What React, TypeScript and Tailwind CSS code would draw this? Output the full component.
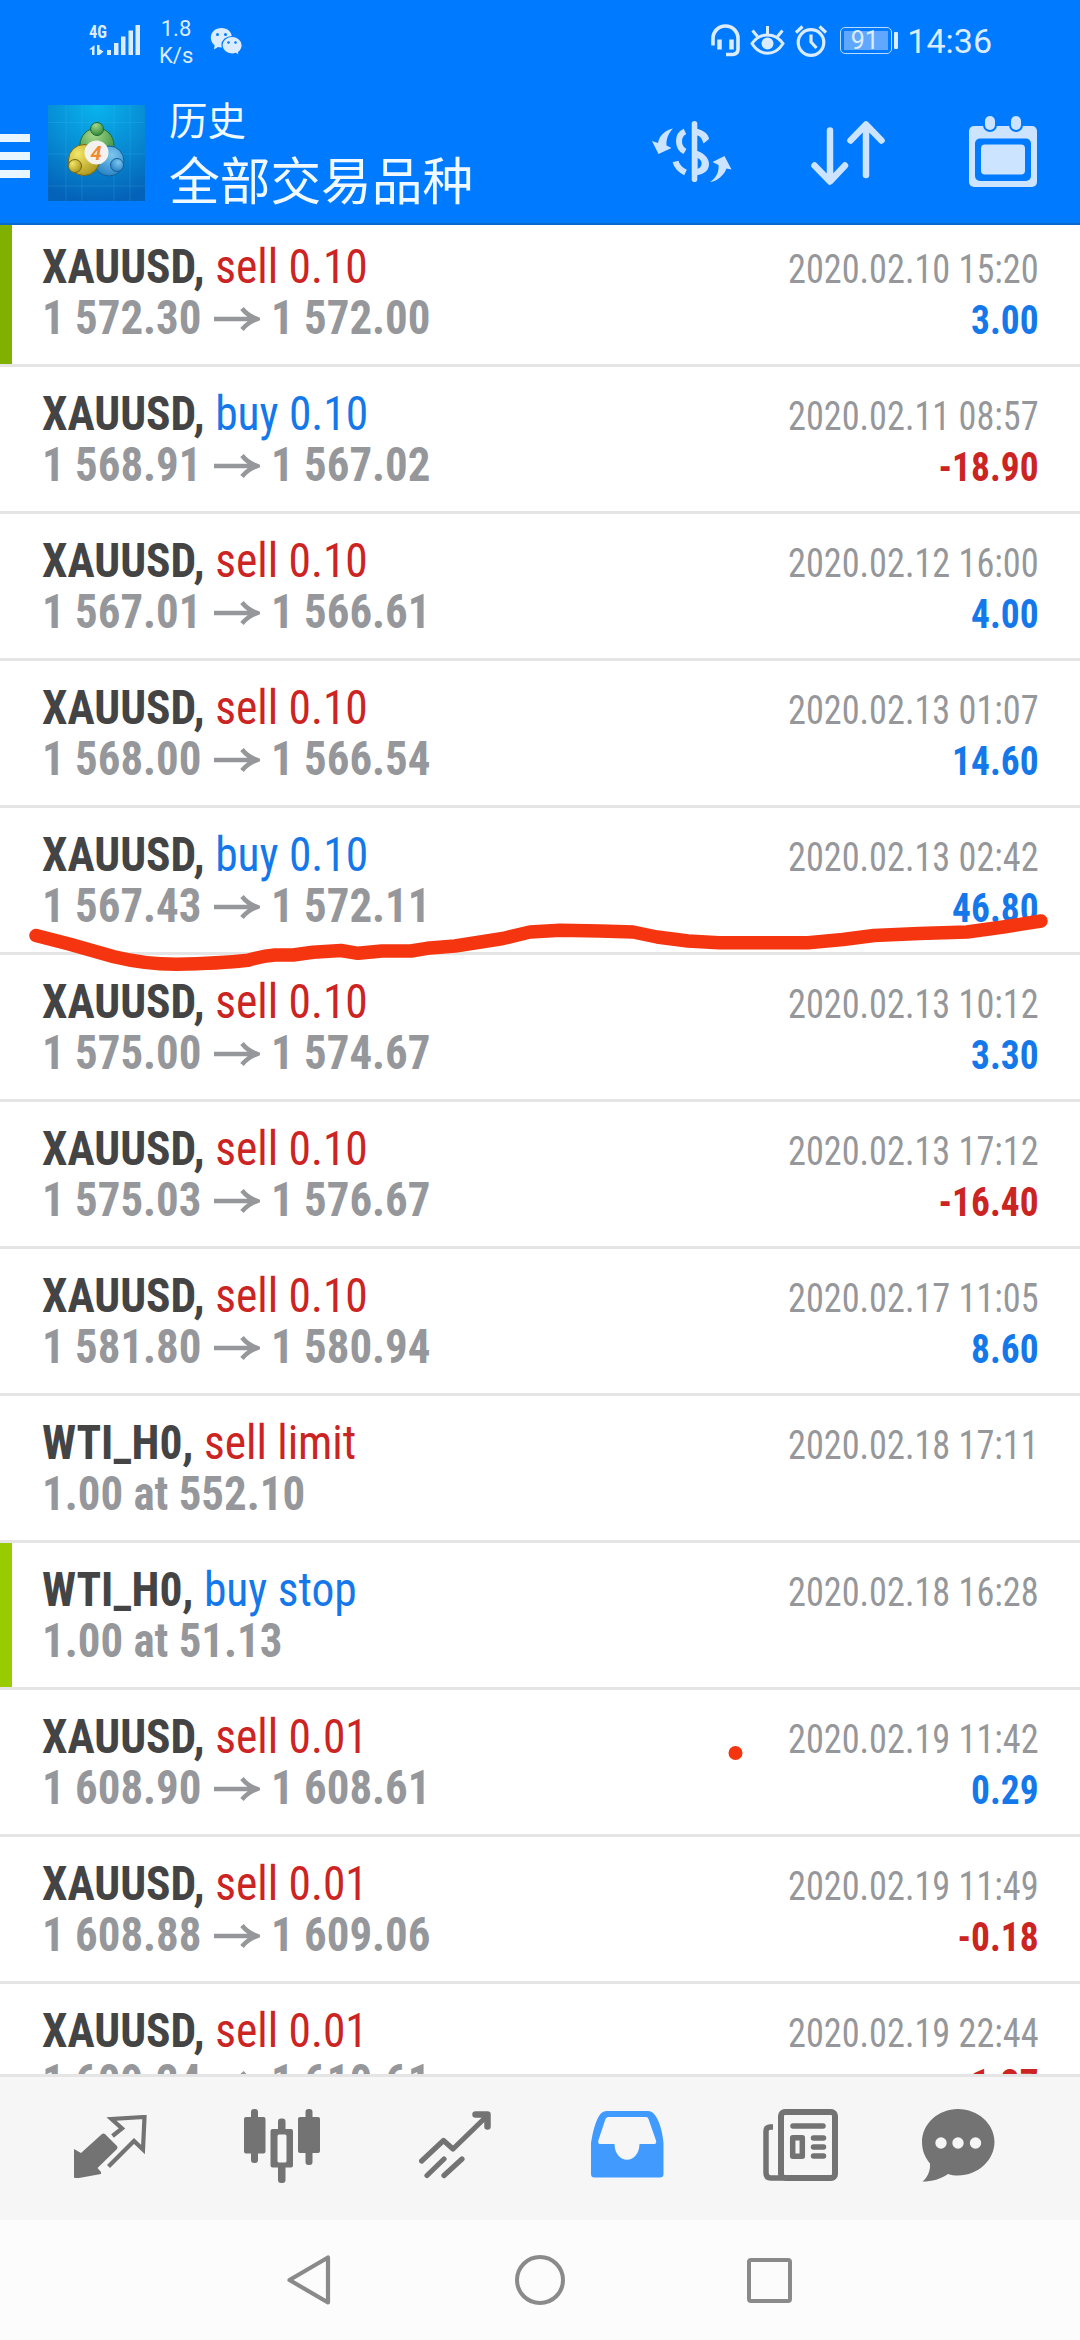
interface Deal {
  symbol: string;
  side: "buy" | "sell";
  volume: string;
  open?: string;
  close?: string;
  note?: string;
  time: string;
  profit?: string;
  mark?: "dark" | "light";
}

const deals: Deal[] = [
  { symbol: "XAUUSD", side: "sell", volume: "0.10", open: "1 572.30", close: "1 572.00", time: "2020.02.10 15:20", profit: "3.00", mark: "dark" },
  { symbol: "XAUUSD", side: "buy", volume: "0.10", open: "1 568.91", close: "1 567.02", time: "2020.02.11 08:57", profit: "-18.90" },
  { symbol: "XAUUSD", side: "sell", volume: "0.10", open: "1 567.01", close: "1 566.61", time: "2020.02.12 16:00", profit: "4.00" },
  { symbol: "XAUUSD", side: "sell", volume: "0.10", open: "1 568.00", close: "1 566.54", time: "2020.02.13 01:07", profit: "14.60" },
  { symbol: "XAUUSD", side: "buy", volume: "0.10", open: "1 567.43", close: "1 572.11", time: "2020.02.13 02:42", profit: "46.80" },
  { symbol: "XAUUSD", side: "sell", volume: "0.10", open: "1 575.00", close: "1 574.67", time: "2020.02.13 10:12", profit: "3.30" },
  { symbol: "XAUUSD", side: "sell", volume: "0.10", open: "1 575.03", close: "1 576.67", time: "2020.02.13 17:12", profit: "-16.40" },
  { symbol: "XAUUSD", side: "sell", volume: "0.10", open: "1 581.80", close: "1 580.94", time: "2020.02.17 11:05", profit: "8.60" },
  { symbol: "WTI_H0", side: "sell", volume: "limit", note: "1.00 at 552.10", time: "2020.02.18 17:11" },
  { symbol: "WTI_H0", side: "buy", volume: "stop", note: "1.00 at 51.13", time: "2020.02.18 16:28", mark: "light" },
  { symbol: "XAUUSD", side: "sell", volume: "0.01", open: "1 608.90", close: "1 608.61", time: "2020.02.19 11:42", profit: "0.29" },
  { symbol: "XAUUSD", side: "sell", volume: "0.01", open: "1 608.88", close: "1 609.06", time: "2020.02.19 11:49", profit: "-0.18" },
  { symbol: "XAUUSD", side: "sell", volume: "0.01", open: "1 609.24", close: "1 610.61", time: "2020.02.19 22:44", profit: "-1.37" },
];

const StatusBar = () => (
  <div className="flex h-[80px] items-start justify-between pl-[89px] pr-[88px] pt-[18px] text-[#dcecff]">
    <div className="flex items-start">
      <svg width="52" height="40" viewBox="0 0 52 40" className="overflow-visible" fill="currentColor">
        <text x="0" y="20" textLength="18" lengthAdjust="spacingAndGlyphs" className="font-['Roboto_Condensed',sans-serif] text-[19px] font-bold">4G</text>
        <path d="M0 31.500L5.500 27V37H3V31.500H0zM8 27H10.500V31L14.500 33.500 10.500 37H8z" />
        <path d="M18 32h4v5h-4zM25 25h4.500v12H25zM32 18.500h4.500V37H32zM39.500 12.500H44V37h-4.500zM46.500 7H51v30h-4.500z" />
      </svg>
      <div className="-mt-[3px] ml-[18px] w-[34px] text-center font-['Roboto',sans-serif] text-[22px] leading-[27px]">
        <div>1.8</div>
        <div>K/s</div>
      </div>
      <svg width="33" height="30" viewBox="0 0 33 30" className="ml-[17px] mt-[9px]">
        <path d="M11.500 1C5.400 1 .8 5.200.8 10.600c0 3.300 1.500 5.900 3.800 7.700L4 22.500l4-2.400c5 1.500 14-.5 14-9.500C22 5.200 17.600 1 11.500 1z" fill="currentColor" />
        <path d="M22 9.500c-5.600 0-10 3.800-10 8.700s4.400 8.800 10 8.800c1.300 0 2.700-.2 3.800-.6l3.400 2-.6-3.200c2.200-1.700 3.600-4.200 3.600-7 0-4.900-4.600-8.700-10.200-8.700z" fill="currentColor" stroke="#007aff" strokeWidth="1.200" />
        <g fill="#007aff">
          <circle cx="7.500" cy="7.500" r="1.500" />
          <circle cx="15.500" cy="7.500" r="1.500" />
          <circle cx="18.500" cy="15.500" r="1.300" />
          <circle cx="25.500" cy="15.500" r="1.300" />
        </g>
      </svg>
    </div>

    <div className="flex items-start">
      <svg width="30" height="34" viewBox="0 0 30 34" className="mt-[6px]" fill="none" stroke="currentColor" strokeWidth="3.600">
        <path d="M2 21.500V14.500C2 7.500 7.500 2 14.500 2S27 7.500 27 14.500V25q0 5-5 5.500H15" />
        <path d="M8.500 15.500v10M20.500 15.500v10" strokeWidth="4.500" />
      </svg>
      <svg width="36" height="32" viewBox="0 0 36 32" className="ml-[9px] mt-[7px]" fill="none" stroke="currentColor" strokeWidth="3">
        <path d="M2 18.500C10 7 25 7 33 18.500 25 31.500 10 31.500 2 18.500z" />
        <path d="M17.500 1v8M2.500 5.500l5 6M32.500 5.500l-5 6" />
        <circle cx="17.500" cy="18.500" r="6" fill="currentColor" stroke="none" />
      </svg>
      <svg width="32" height="33" viewBox="0 0 32 33" className="ml-[9px] mt-[7px]" fill="none" stroke="currentColor" strokeWidth="3.200">
        <circle cx="16" cy="17.500" r="12.800" />
        <path d="M16 9.500v7.500l5.500 6M1 7.500l6.500-6M24.500 1.500l6.500 6" />
      </svg>
      <div className="ml-[13px] mt-[9px] flex items-center">
        <div className="flex h-[27px] w-[52px] rounded-[5px] border-[1.500px] border-[#b8dcff] p-[3px]">
          <div className="flex flex-1 items-center justify-center bg-[#60a8ff] font-['Roboto',sans-serif] text-[25px] leading-none">
            <span className="pr-[3px]">91</span>
          </div>
        </div>
        <div className="ml-[2px] h-[17px] w-[4px] rounded-[1px] bg-[#dcecff]" />
      </div>
      <div className="ml-[9px] mt-[3px] font-['Roboto',sans-serif] text-[34px] leading-[40px]">14:36</div>
    </div>
  </div>
);

const AppLogo = () => (
  <svg width="97" height="96" viewBox="0 0 97 96" className="ml-[18px] mt-[25px]">
    <defs>
      <radialGradient id="bg" cx=".5" cy="0" r="1">
        <stop offset="0" stopColor="#08b4ee" />
        <stop offset=".55" stopColor="#078ad2" />
        <stop offset="1" stopColor="#0463b8" />
      </radialGradient>
      <radialGradient id="green" cx=".4" cy=".2" r=".9">
        <stop offset="0" stopColor="#a5d88c" />
        <stop offset="1" stopColor="#257f2d" />
      </radialGradient>
      <radialGradient id="gold" cx=".3" cy=".3" r=".9">
        <stop offset="0" stopColor="#f3e768" />
        <stop offset="1" stopColor="#a18a12" />
      </radialGradient>
      <radialGradient id="blue" cx=".6" cy=".3" r=".9">
        <stop offset="0" stopColor="#7cc6ef" />
        <stop offset="1" stopColor="#1473ba" />
      </radialGradient>
    </defs>
    <rect width="97" height="96" fill="url(#bg)" />
    <path d="M0 17.500h97M0 49h97M0 81h97M18 0v96M34 0v96M66 0v96M82 0v96" stroke="#4fc0f0" strokeOpacity=".2" />
    <circle cx="49" cy="40" r="17" fill="url(#green)" stroke="#1b6a35" />
    <circle cx="61" cy="56" r="15" fill="url(#blue)" stroke="#155d99" />
    <circle cx="36" cy="55" r="15.500" fill="url(#gold)" stroke="#776812" />
    <circle cx="49" cy="24" r="6.500" fill="url(#green)" stroke="#1b6a35" />
    <circle cx="27" cy="61" r="6.500" fill="url(#gold)" stroke="#776812" />
    <circle cx="69" cy="60" r="6.500" fill="url(#blue)" stroke="#155d99" />
    <circle cx="48.500" cy="47.500" r="12" fill="#f4f2ee" />
    <text x="48" y="54.500" textAnchor="middle" fill="#f28a2e" className="font-['Roboto',sans-serif] text-[20px] font-bold italic">4</text>
  </svg>
);

const AppBar = () => (
  <div className="flex h-[145px] items-start border-b-2 border-[#0b6ad0]">
    <div className="mt-[54px] flex w-[30px] flex-col gap-[10px]">
      <div className="h-[8px] bg-[#e8f6ff]" />
      <div className="h-[8px] bg-[#e8f6ff]" />
      <div className="h-[8px] bg-[#e8f6ff]" />
    </div>
    <AppLogo />
    <div className="ml-[24px] mt-[11px] font-['Noto_Sans_CJK_SC',sans-serif] text-[#f0f9ff]">
      <div className="text-[38.500px] leading-[54px]">历史</div>
      <div className="text-[50.700px] leading-[66px]">全部交易品种</div>
    </div>
    <svg width="80" height="62" viewBox="0 0 80 62" className="ml-auto mt-[41px]" fill="#cce4ff">
      <path d="M33 10.500C25 14 25 26 33 30.500M23.500 40.500C25 46 28.500 49 33.500 51.500" fill="none" stroke="#cce4ff" strokeWidth="6" />
      <rect x="39.700" width="5.600" height="61" rx="2.800" />
      <path d="M44 7.500C52 9 57 14 57 18L51.500 22.500C50 17.500 48.500 15 44 14z" />
      <path fillRule="evenodd" d="M44 29.500C52 32 57 37 57 43S53 53 44 54.500zM45.500 37V48C51 46 51 39 45.500 37z" />
      <path d="M21 7.500C13 9 7 15 6 22L0 20 6.500 33 19.500 27 14.500 24.500C14 18 16.500 12 21 7.500zM58 61C65 56.500 67 50.500 66.500 44L60.500 41 72.500 35 79.500 48.500 74.500 47.500C72 54 66 60 58 61z" />
    </svg>
    <svg width="74" height="65" viewBox="0 0 74 65" className="ml-[79px] mt-[41px]" fill="none" stroke="#cce4ff" strokeWidth="6.500" strokeLinecap="round" strokeLinejoin="round">
      <path d="M19 9.500V60M3.500 44.500L19 60.500 34 44.500" />
      <path d="M55 54V4M39.500 19.500L55 3.500 70.500 19.500" />
    </svg>
    <svg width="68" height="71" viewBox="0 0 68 71" className="ml-[84px] mr-[43px] mt-[36px]">
      <rect y="10" width="68" height="61" rx="5" fill="#cce4ff" />
      <rect x="6" y="22.500" width="56" height="42.500" rx="5" fill="#007aff" />
      <rect x="12" y="28.500" width="44" height="30" rx="4" fill="#cce4ff" />
      <rect x="14" y="-2" width="14" height="18" rx="7" fill="#007aff" />
      <rect x="40" y="-2" width="14" height="18" rx="7" fill="#007aff" />
      <rect x="16" y="0" width="10" height="14" rx="5" fill="#cce4ff" />
      <rect x="42" y="0" width="10" height="14" rx="5" fill="#cce4ff" />
    </svg>
  </div>
);

const DealRow = ({ deal }: { deal: Deal }) => {
  const isLoss = deal.profit?.startsWith("-");

  return (
    <li className="flex h-[147px] shrink-0 border-b-[3px] border-[#e5e5e5]">
      <div className={`w-[12px] shrink-0 ${deal.mark === "dark" ? "bg-[#80b000]" : deal.mark === "light" ? "bg-[#99cc00]" : ""}`} />
      <div className="flex flex-1 justify-between whitespace-nowrap pl-[30px] pr-[41px] font-['Roboto_Condensed',sans-serif] leading-[51px]">
        <div className="pt-[21px] text-[48px]">
          <div className="origin-left scale-x-[0.947]">
            <span className="font-bold text-[#444444]">{deal.symbol},</span>{" "}
            <span className={deal.side === "buy" ? "text-[#1478ea]" : "text-[#cc2323]"}>
              {deal.side} {deal.volume}
            </span>
          </div>
          {deal.note ? (
            <div className="origin-left scale-x-[0.935] font-bold text-[#95979b]">{deal.note}</div>
          ) : (
            <div className="flex items-center font-bold text-[#95979b]">
              <span className="w-[172px] origin-left scale-x-[0.935]">{deal.open}</span>
              <svg width="46" height="24" viewBox="0 0 46 24" className="mt-[2px]" fill="none" stroke="currentColor" strokeWidth="4.500">
                <path d="M0 12H43M28 1.500C32 6.500 37 10 43 12 37 14 32 17.500 28 22.500" />
              </svg>
              <span className="ml-[11px] origin-left scale-x-[0.935]">{deal.close}</span>
            </div>
          )}
        </div>
        <div className="pt-[24px] text-right text-[40px]">
          <div className="origin-right scale-x-[0.906] text-[#95979b]">{deal.time}</div>
          <div className={`origin-right scale-x-[0.935] font-bold ${isLoss ? "text-[#cc2323]" : "text-[#1478ea]"}`}>{deal.profit}</div>
        </div>
      </div>
    </li>
  );
};

const BottomTabs = () => (
  <div className="flex h-[146px] items-start border-t-[3px] border-[#e5e5e5] bg-[#f6f6f6] pl-[74px] text-[#737373]">
    <svg width="73" height="64" viewBox="0 0 73 64" className="mt-[38px]">
      <path d="M0 34L7 38 28 19Q29.500 18 31 19L43 31Q44 32.500 43 34L23.500 53 27 57V59L5 63H1Q0 63 0 62z" fill="currentColor" />
      <path d="M38.500 21L48 13.500 37.500 4 70.500 2 69 34.500 60 26 34.500 51.500" fill="none" stroke="currentColor" strokeWidth="4.200" />
    </svg>
    <svg width="76" height="74" viewBox="0 0 76 74" className="ml-[97px] mt-[32px]" fill="currentColor">
      <rect y="8" width="21.500" height="36.500" rx="2" />
      <rect x="7" width="7" height="54" rx="3" />
      <rect x="54" y="8" width="22" height="36" rx="2" />
      <rect x="61.500" width="7" height="56" rx="3" />
      <rect x="34" y="9.500" width="7.500" height="14" rx="3" />
      <rect x="34" y="54" width="7.500" height="20" rx="3" />
      <path fillRule="evenodd" d="M28.500 20h18.500a2 2 0 0 1 2 2v34.500a2 2 0 0 1-2 2H28.500a2 2 0 0 1-2-2V22a2 2 0 0 1 2-2zM35 25.500q-1.500 0-1.500 1.500v25q0 1.500 1.500 1.500h6q1.500 0 1.500-1.500V27q0-1.500-1.500-1.500z" />
    </svg>
    <svg width="73" height="68" viewBox="0 0 73 68" className="ml-[99px] mt-[34px]" fill="none" stroke="currentColor" strokeWidth="5.200" strokeLinecap="round" strokeLinejoin="round">
      <path d="M2.600 50L24.500 29.500 34 38 68 5M8 64.500L25 48M25 64.500L43 48" />
      <path d="M56.500 3.500H68.500V15.500" strokeWidth="6.500" />
    </svg>
    <svg width="73" height="67" viewBox="0 0 73 67" className="ml-[99px] mt-[34px]" fill="#419bff">
      <path fillRule="evenodd" d="M0 32C2 19 5 9 9 3.500Q11.500 0 16 0H57Q61 0 63.500 3.500C68 9 71.500 20 72.500 32V63Q72.500 66.500 69 66.500H3.500Q0 66.500 0 63zM17.500 6Q15.500 6 14.500 8L7.500 29Q6.500 33 9 33H23.500C24 54 48 54 48.500 33H63Q66 33 65 29.500L57.500 8Q57 6 55 6z" />
    </svg>
    <svg width="75" height="72" viewBox="0 0 75 72" className="ml-[99px] mt-[32px]" fill="none" stroke="currentColor" strokeWidth="6">
      <rect x="18" y="3" width="54" height="66" rx="4" />
      <path d="M10 18H7Q3 18.500 3 22V64Q3 69 8 69H20" strokeWidth="5.500" />
      <path d="M30 17H60M50.500 29H60.500M50.500 38H60.500M50.500 47H60.500" strokeLinecap="round" strokeWidth="5.500" />
      <rect x="29.700" y="28.700" width="9.600" height="18.600" strokeWidth="5.500" strokeLinejoin="round" />
    </svg>
    <svg width="73" height="73" viewBox="0 0 73 73" className="ml-[84px] mt-[32px]">
      <path d="M36 0C56 0 72.500 15 72.500 33S56 66.500 36 66.500C32.500 66.500 29.500 66 26 65 19 70 10 72.500 .5 72.500 6 68 8.500 61 8 54.500 3 48.500 0 41.500 0 33 0 15 16 0 36 0z" fill="currentColor" />
      <g fill="#f6f6f6">
        <circle cx="19" cy="34" r="5.700" />
        <circle cx="36" cy="34" r="5.700" />
        <circle cx="53.500" cy="34" r="5.700" />
      </g>
    </svg>
  </div>
);

const SystemNav = () => (
  <div className="flex h-[120px] items-center bg-[#fcfcfc] pl-[287px] text-[#8a8a8a]">
    <svg width="44" height="50" viewBox="0 0 44 50" fill="none" stroke="currentColor" strokeWidth="4.200" strokeLinejoin="round">
      <path d="M2.500 25L41 2.500V47.500z" />
    </svg>
    <div className="ml-[184px] size-[50px] rounded-full border-4 border-[#8a8a8a]" />
    <div className="ml-[182px] size-[45px] rounded-[4px] border-4 border-[#8a8a8a]" />
  </div>
);

const App = () => {
  return (
    <div className="relative flex h-[2340px] w-[1080px] flex-col overflow-hidden bg-white">
      <header className="bg-[#007aff]">
        <StatusBar />
        <AppBar />
      </header>

      {/* Deal history, scrolled a few pixels under the header */}
      <main className="min-h-0 flex-1 overflow-hidden">
        <ul className="-mt-[5px] flex flex-col">
          {deals.map((deal) => (
            <DealRow key={deal.time} deal={deal} />
          ))}
        </ul>
      </main>

      <BottomTabs />
      <SystemNav />

      {/* Hand-drawn marker over the list */}
      <svg width="1080" height="2340" viewBox="0 0 1080 2340" className="pointer-events-none absolute inset-0">
        <path
          d="M36 935.500L69 944 114 956.700Q144 964 176 964.300Q220 963.500 248 960.300Q262 956 275 955H293L313 952.300 341 950.500 358 953.300 382 951H411L427 948.300 455 946 503 938.500 530 932 560 930.300 600 931 633 932 657 937 688 941 719 942.700H808L843 939.500 874 935.500 919 933.500 967 932 1005 926.700 1041 921"
          fill="none"
          stroke="#f53410"
          strokeWidth="13.500"
          strokeLinecap="round"
          strokeLinejoin="round"
        />
        <circle cx="735.500" cy="1753" r="7" fill="#f53410" />
      </svg>
    </div>
  );
};

export default App;
